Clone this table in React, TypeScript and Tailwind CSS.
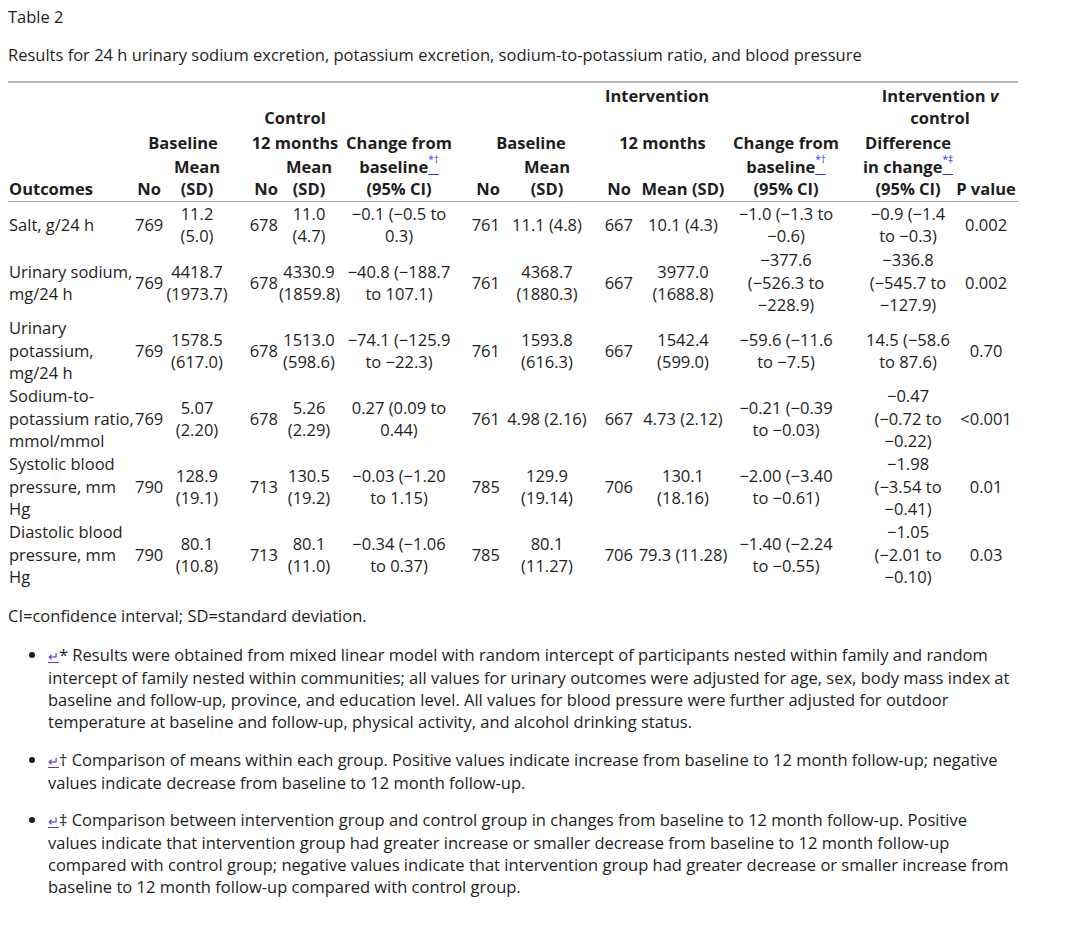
import React from "react";

type Row = {
  h: string;
  o: string[];
  n1: string;
  m1: string[];
  n2: string;
  m2: string[];
  ch: string[];
  n3: string;
  m3: string[];
  n4: string;
  m4: string[];
  ch2: string[];
  d: string[];
  p: string;
};

const rows: Row[] = [
  {
    h: "h-[48px]",
    o: ["Salt, g/24 h"],
    n1: "769",
    m1: ["11.2", "(5.0)"],
    n2: "678",
    m2: ["11.0", "(4.7)"],
    ch: ["−0.1 (−0.5 to", "0.3)"],
    n3: "761",
    m3: ["11.1 (4.8)"],
    n4: "667",
    m4: ["10.1 (4.3)"],
    ch2: ["−1.0 (−1.3 to", "−0.6)"],
    d: ["−0.9 (−1.4", "to −0.3)"],
    p: "0.002",
  },
  {
    h: "h-[68px]",
    o: ["Urinary sodium,", "mg/24 h"],
    n1: "769",
    m1: ["4418.7", "(1973.7)"],
    n2: "678",
    m2: ["4330.9", "(1859.8)"],
    ch: ["−40.8 (−188.7", "to 107.1)"],
    n3: "761",
    m3: ["4368.7", "(1880.3)"],
    n4: "667",
    m4: ["3977.0", "(1688.8)"],
    ch2: ["−377.6", "(−526.3 to", "−228.9)"],
    d: ["−336.8", "(−545.7 to", "−127.9)"],
    p: "0.002",
  },
  {
    h: "h-[68px]",
    o: ["Urinary", "potassium,", "mg/24 h"],
    n1: "769",
    m1: ["1578.5", "(617.0)"],
    n2: "678",
    m2: ["1513.0", "(598.6)"],
    ch: ["−74.1 (−125.9", "to −22.3)"],
    n3: "761",
    m3: ["1593.8", "(616.3)"],
    n4: "667",
    m4: ["1542.4", "(599.0)"],
    ch2: ["−59.6 (−11.6", "to −7.5)"],
    d: ["14.5 (−58.6", "to 87.6)"],
    p: "0.70",
  },
  {
    h: "h-[68px]",
    o: ["Sodium-to-", "potassium ratio,", "mmol/mmol"],
    n1: "769",
    m1: ["5.07", "(2.20)"],
    n2: "678",
    m2: ["5.26", "(2.29)"],
    ch: ["0.27 (0.09 to", "0.44)"],
    n3: "761",
    m3: ["4.98 (2.16)"],
    n4: "667",
    m4: ["4.73 (2.12)"],
    ch2: ["−0.21 (−0.39", "to −0.03)"],
    d: ["−0.47", "(−0.72 to", "−0.22)"],
    p: "<0.001",
  },
  {
    h: "h-[68px]",
    o: ["Systolic blood", "pressure, mm", "Hg"],
    n1: "790",
    m1: ["128.9", "(19.1)"],
    n2: "713",
    m2: ["130.5", "(19.2)"],
    ch: ["−0.03 (−1.20", "to 1.15)"],
    n3: "785",
    m3: ["129.9", "(19.14)"],
    n4: "706",
    m4: ["130.1", "(18.16)"],
    ch2: ["−2.00 (−3.40", "to −0.61)"],
    d: ["−1.98", "(−3.54 to", "−0.41)"],
    p: "0.01",
  },
  {
    h: "h-[68px]",
    o: ["Diastolic blood", "pressure, mm", "Hg"],
    n1: "790",
    m1: ["80.1", "(10.8)"],
    n2: "713",
    m2: ["80.1", "(11.0)"],
    ch: ["−0.34 (−1.06", "to 0.37)"],
    n3: "785",
    m3: ["80.1", "(11.27)"],
    n4: "706",
    m4: ["79.3 (11.28)"],
    ch2: ["−1.40 (−2.24", "to −0.55)"],
    d: ["−1.05", "(−2.01 to", "−0.10)"],
    p: "0.03",
  },
];

function Lines({ lines }: { lines: string[] }) {
  return (
    <>
      {lines.map((l, i) => (
        <div key={i}>{l}</div>
      ))}
    </>
  );
}

function Sup({ s }: { s: string }) {
  return (
    <a className="text-[#3030f0] underline decoration-[#3030f0] decoration-1">
      <sup className="text-[10px] font-normal leading-[0] align-[5px]">{s}</sup>
    </a>
  );
}

function Ret() {
  return <a className="text-[#4a3ad8] underline decoration-1 text-[13px]">↵</a>;
}

const td = "p-0 align-middle whitespace-nowrap leading-[22.5px]";
const th = "p-0 align-middle whitespace-nowrap font-bold leading-[21px]";

export default function App() {
  return (
    <div className="bg-white min-h-[927px] w-[1080px] px-2 pt-[6px] text-[16.5px] text-[#1e1e1e] font-['Open_Sans',sans-serif]">
      <div className="leading-[22px]">Table 2</div>
      <div className="mt-[16px] leading-[22px]">
        Results for 24 h urinary sodium excretion, potassium excretion, sodium-to-potassium ratio, and blood pressure
      </div>
      <div className="mt-[15px] h-[2px] w-[1010px] bg-[#b4b4b4]" />
      <table className="table-fixed w-[1010px] border-collapse">
        <colgroup>
          <col className="w-[127px]" />
          <col className="w-[28px]" />
          <col className="w-[68px]" />
          <col className="w-[48px]" />
          <col className="w-[60px]" />
          <col className="w-[120px]" />
          <col className="w-[42px]" />
          <col className="w-[92px]" />
          <col className="w-[41px]" />
          <col className="w-[98px]" />
          <col className="w-[108px]" />
          <col className="w-[114px]" />
          <col className="w-[64px]" />
        </colgroup>
        <thead>
          <tr className="h-[24px]">
            <th className={th} />
            <th className={th} colSpan={5} />
            <th className={`${th} text-center pl-[15px]`} colSpan={5}>
              Intervention
            </th>
            <th className={`${th} text-center pl-[22px]`} colSpan={2}>
              Intervention <i>v</i>
            </th>
          </tr>
          <tr className="h-[21px]">
            <th className={th} />
            <th className={`${th} text-center pr-[4px]`} colSpan={5}>
              Control
            </th>
            <th className={th} colSpan={5} />
            <th className={`${th} text-center pl-[22px]`} colSpan={2}>
              control
            </th>
          </tr>
          <tr className="h-[28px]">
            <th className={th} />
            <th className={`${th} text-center`} colSpan={2}>
              Baseline
            </th>
            <th className={`${th} text-center pl-[20px]`} colSpan={2}>
              12 months
            </th>
            <th className={`${th} text-center`}>Change from</th>
            <th className={`${th} text-center pl-[10px]`} colSpan={2}>
              Baseline
            </th>
            <th className={`${th} text-center`} colSpan={2}>
              12 months
            </th>
            <th className={`${th} text-center`}>Change from</th>
            <th className={`${th} text-center pl-[22px]`}>Difference</th>
            <th className={th} />
          </tr>
          <tr className="h-[21px]">
            <th className={th} />
            <th className={th} />
            <th className={`${th} text-center`}>Mean</th>
            <th className={th} />
            <th className={`${th} text-center`}>Mean</th>
            <th className={`${th} text-center`}>
              baseline
              <Sup s="*†" />
            </th>
            <th className={th} />
            <th className={`${th} text-center`}>Mean</th>
            <th className={th} />
            <th className={th} />
            <th className={`${th} text-center`}>
              baseline
              <Sup s="*†" />
            </th>
            <th className={`${th} text-center pl-[22px]`}>
              in change
              <Sup s="*‡" />
            </th>
            <th className={th} />
          </tr>
          <tr className="h-[24px] border-b border-[#a8a8a8]">
            <th className={`${th} text-left pl-[1px]`}>Outcomes</th>
            <th className={`${th} text-right pr-[2px]`}>No</th>
            <th className={`${th} text-center`}>(SD)</th>
            <th className={`${th} text-right pr-[1px]`}>No</th>
            <th className={`${th} text-center`}>(SD)</th>
            <th className={`${th} text-center`}>(95% CI)</th>
            <th className={`${th} text-right pr-[1px]`}>No</th>
            <th className={`${th} text-center`}>(SD)</th>
            <th className={`${th} text-right pr-[3px]`}>No</th>
            <th className={`${th} text-center`}>Mean (SD)</th>
            <th className={`${th} text-center`}>(95% CI)</th>
            <th className={`${th} text-center pl-[22px]`}>(95% CI)</th>
            <th className={`${th} text-center`}>P value</th>
          </tr>
        </thead>
        <tbody>
          {rows.map((r, i) => (
            <tr key={i} className={r.h}>
              <td className={`${td} text-left pl-[1px]`}>
                <Lines lines={r.o} />
              </td>
              <td className={`${td} text-right pr-[2px]`}>{r.n1}</td>
              <td className={`${td} text-center`}>
                <Lines lines={r.m1} />
              </td>
              <td className={`${td} text-right pr-[1px]`}>{r.n2}</td>
              <td className={`${td} text-center`}>
                <Lines lines={r.m2} />
              </td>
              <td className={`${td} text-center`}>
                <Lines lines={r.ch} />
              </td>
              <td className={`${td} text-right pr-[1px]`}>{r.n3}</td>
              <td className={`${td} text-center`}>
                <Lines lines={r.m3} />
              </td>
              <td className={`${td} text-right pr-[1px]`}>{r.n4}</td>
              <td className={`${td} text-center`}>
                <Lines lines={r.m4} />
              </td>
              <td className={`${td} text-center`}>
                <Lines lines={r.ch2} />
              </td>
              <td className={`${td} text-center pl-[22px]`}>
                <Lines lines={r.d} />
              </td>
              <td className={`${td} text-center`}>{r.p}</td>
            </tr>
          ))}
        </tbody>
      </table>
      <div className="mt-[16px] leading-[22px]">CI=confidence interval; SD=standard deviation.</div>
      <ul className="mt-[17px] list-disc pl-[40px] leading-[22px] whitespace-nowrap">
        <li className="mb-[16px]">
          <Ret />* Results were obtained from mixed linear model with random intercept of participants nested within family and random
          <br />
          intercept of family nested within communities; all values for urinary outcomes were adjusted for age, sex, body mass index at
          <br />
          baseline and follow-up, province, and education level. All values for blood pressure were further adjusted for outdoor
          <br />
          temperature at baseline and follow-up, physical activity, and alcohol drinking status.
        </li>
        <li className="mb-[15px]">
          <Ret />† Comparison of means within each group. Positive values indicate increase from baseline to 12 month follow-up; negative
          <br />
          values indicate decrease from baseline to 12 month follow-up.
        </li>
        <li>
          <Ret />‡ Comparison between intervention group and control group in changes from baseline to 12 month follow-up. Positive
          <br />
          values indicate that intervention group had greater increase or smaller decrease from baseline to 12 month follow-up
          <br />
          compared with control group; negative values indicate that intervention group had greater decrease or smaller increase from
          <br />
          baseline to 12 month follow-up compared with control group.
        </li>
      </ul>
    </div>
  );
}
